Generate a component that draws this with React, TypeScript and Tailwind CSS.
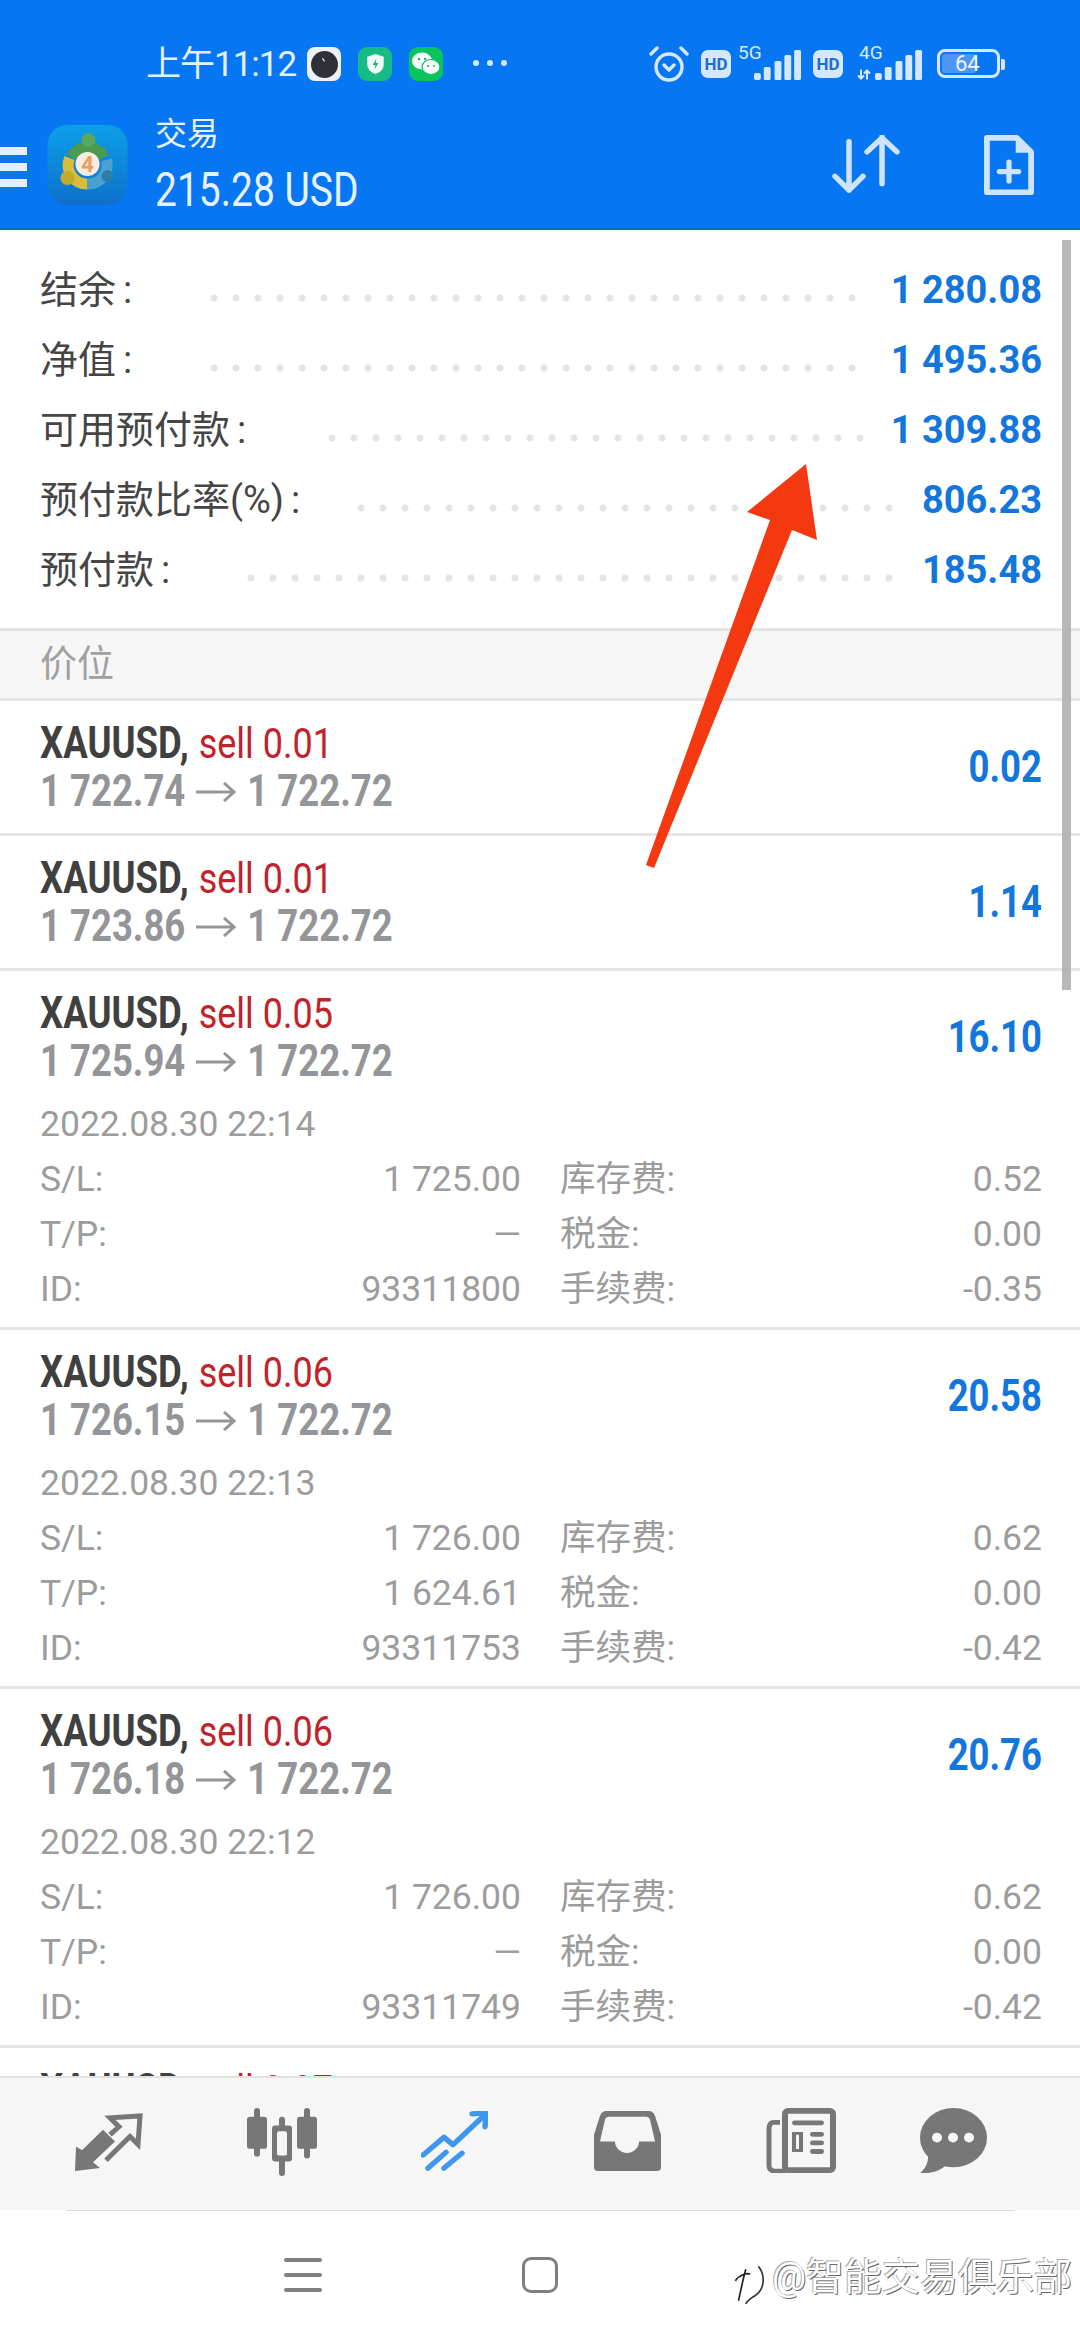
import React from 'react';

const summary = [
  { label: '结余', value: '1 280.08', dots: 'w-[660px] mr-[28px]' },
  { label: '净值', value: '1 495.36', dots: 'w-[660px] mr-[28px]' },
  { label: '可用预付款', value: '1 309.88', dots: 'w-[550px] mr-[20px]' },
  { label: '预付款比率(%)', value: '806.23', dots: 'w-[550px] mr-[22px]' },
  { label: '预付款', value: '185.48', dots: 'w-[660px] mr-[22px]' },
];

const positions = [
  { lot: '0.01', open: '1 722.74', profit: '0.02' },
  { lot: '0.01', open: '1 723.86', profit: '1.14' },
  { lot: '0.05', open: '1 725.94', profit: '16.10', date: '2022.08.30 22:14', sl: '1 725.00', swap: '0.52', tp: '—', id: '93311800', fee: '-0.35' },
  { lot: '0.06', open: '1 726.15', profit: '20.58', date: '2022.08.30 22:13', sl: '1 726.00', swap: '0.62', tp: '1 624.61', id: '93311753', fee: '-0.42' },
  { lot: '0.06', open: '1 726.18', profit: '20.76', date: '2022.08.30 22:12', sl: '1 726.00', swap: '0.62', tp: '—', id: '93311749', fee: '-0.42' },
  { lot: '0.07', open: '1 726.20', profit: '24.36' },
];

const SignalBars = ({ className }: { className: string }) => (
  <svg viewBox="0 0 48 30" className={className} fill="#d6e8fd" preserveAspectRatio="none">
    <rect x="0" y="23" width="7" height="7" rx="2" />
    <rect x="10" y="17" width="7" height="13" rx="1.5" />
    <rect x="21" y="11" width="7" height="19" rx="1.5" />
    <rect x="31" y="5" width="7" height="25" rx="1.5" />
    <rect x="41" y="0" width="7" height="30" rx="1.5" />
  </svg>
);

const HdBadge = () => (
  <div className="flex h-[28px] w-[30px] items-center justify-center rounded-[7px] bg-[#d6e8fd] font-['Roboto'] text-[17px] font-bold leading-none text-[#1a6fd0]">HD</div>
);

const StatusBar = () => (
  <div className="flex h-[106px] items-start pt-[46px] text-[#e3f0fe]">
    <div className="ml-[146px] flex h-[36px] w-[151px] items-center whitespace-nowrap font-['Roboto','Noto_Sans_CJK_SC',sans-serif] text-[35px] leading-none tracking-[-1px]">上午11:12</div>
    <div className="ml-[10px] mt-[1px] flex h-[34px] w-[34px] items-center justify-center rounded-[8px] bg-[#eef2f8]">
      <svg viewBox="0 0 26 26" className="h-[27px] w-[27px]">
        <circle cx="13" cy="13" r="13" fill="#2f3136" />
        <path d="M11 7l2 3" stroke="#fff" strokeWidth="1" />
      </svg>
    </div>
    <div className="ml-[17px] mt-[1px] flex h-[34px] w-[34px] items-center justify-center rounded-[9px] bg-[#17bb85]">
      <svg viewBox="0 0 20 24" className="h-[22px] w-[19px]">
        <path d="M10 1l9 3v8c0 6-4 9-9 11-5-2-9-5-9-11V4z" fill="#f0faf6" />
        <path d="M11 6l-4 7h3l-1 5 4-7h-3z" fill="#17a877" />
      </svg>
    </div>
    <div className="ml-[17px] mt-[1px] flex h-[34px] w-[34px] items-center justify-center rounded-[9px] bg-[#08c45c]">
      <svg viewBox="0 0 28 24" className="h-[24px] w-[28px]" fill="#fff">
        <ellipse cx="10" cy="9" rx="10" ry="8.5" />
        <ellipse cx="19" cy="15" rx="9" ry="7.5" stroke="#08c45c" strokeWidth="1.2" />
        <circle cx="7" cy="7" r="1.3" fill="#08c45c" />
        <circle cx="13" cy="7" r="1.3" fill="#08c45c" />
        <circle cx="16" cy="14" r="1.1" fill="#08c45c" />
        <circle cx="22" cy="14" r="1.1" fill="#08c45c" />
      </svg>
    </div>
    <div className="ml-[30px] flex h-[34px] items-center gap-[8px]">
      <span className="h-[6px] w-[6px] rounded-full bg-[#d6e8fd]" />
      <span className="h-[6px] w-[6px] rounded-full bg-[#d6e8fd]" />
      <span className="h-[6px] w-[6px] rounded-full bg-[#d6e8fd]" />
    </div>
    <svg viewBox="0 0 40 36" className="ml-[142px] h-[36px] w-[40px]" fill="none" stroke="#d6e8fd" strokeWidth="3.4" strokeLinecap="round" strokeLinejoin="round">
      <circle cx="20" cy="21" r="13" />
      <path d="M15 19l5 5 5-5" />
      <path d="M2 8l6-6M38 8l-6-6" />
    </svg>
    <div className="ml-[12px] mt-[4px]"><HdBadge /></div>
    <div className="relative ml-[7px] h-[34px] w-[63px]">
      <span className="absolute left-0 top-[-3px] font-['Roboto'] text-[19px] leading-none text-[#d6e8fd]">5G</span>
      <SignalBars className="absolute left-[16px] top-[4px] h-[30px] w-[47px]" />
    </div>
    <div className="ml-[12px] mt-[4px]"><HdBadge /></div>
    <div className="relative ml-[13px] h-[34px] w-[66px]">
      <span className="absolute left-[3px] top-[-3px] font-['Roboto'] text-[19px] leading-none text-[#d6e8fd]">4G</span>
      <svg viewBox="0 0 16 10" className="absolute left-0 top-[23px] h-[11px] w-[16px]" fill="none" stroke="#d6e8fd" strokeWidth="2">
        <path d="M5 0v9M2 6l3 3 3-3M11 10V1M8 4l3-3 3 3" />
      </svg>
      <SignalBars className="absolute left-[19px] top-[4px] h-[30px] w-[47px]" />
    </div>
    <div className="relative ml-[15px] mt-[3px] flex h-[29px] w-[63px] items-center rounded-[8px] border-[3px] border-[#d6e8fd] p-[2px]">
      <div className="h-full w-[34px] rounded-[3px] bg-[#4d95f7]" />
      <span className="absolute left-[15px] top-0 font-['Roboto'] text-[22px] leading-[23px] text-[#f0f6ff]">64</span>
    </div>
    <div className="ml-[1px] mt-[13px] h-[11px] w-[4px] rounded-r-[2px] bg-[#d6e8fd]" />
  </div>
);

const Mt4Logo = () => (
  <svg viewBox="0 0 80 80" className="h-[80px] w-[81px]" fill="none">
    <defs>
      <linearGradient id="mt4" x1="0" y1="0" x2="0" y2="1">
        <stop offset="0" stopColor="#0d9fe8" />
        <stop offset="1" stopColor="#0d70ca" />
      </linearGradient>
    </defs>
    <rect width="80" height="80" rx="20" fill="url(#mt4)" />
    <path d="M23.5 32A19 19 0 0 1 56.5 32" stroke="#4c9a4e" strokeWidth="11" />
    <path d="M22 33A19 19 0 0 0 40 59" stroke="#d8bd3a" strokeWidth="11" />
    <path d="M40 59A19 19 0 0 0 59 35" stroke="#4aa0d0" strokeWidth="11" />
    <circle cx="41" cy="15" r="7" fill="#5aa85c" />
    <circle cx="20" cy="53" r="7" fill="#c4a92f" />
    <circle cx="60" cy="51" r="6" fill="#2c7ea8" />
    <circle cx="40" cy="39" r="12" fill="#f6ece2" />
    <text x="40" y="47" textAnchor="middle" fontFamily="Roboto" fontWeight="700" fontSize="22" fill="#ee9d5c">4</text>
  </svg>
);

const AppHeader = () => (
  <div className="flex h-[122px] items-start">
    <div className="mt-[41px] flex w-[27px] flex-col gap-[8px]">
      <div className="h-[8px] bg-[#e4f0fe]" />
      <div className="h-[8px] bg-[#e4f0fe]" />
      <div className="h-[8px] bg-[#e4f0fe]" />
    </div>
    <div className="ml-[20px] mt-[19px]"><Mt4Logo /></div>
    <div className="ml-[27px] mt-[8px] w-[202px] text-[#e6f2ff]">
      <div className="font-['Roboto','Noto_Sans_CJK_SC',sans-serif] text-[32px] leading-[40px]">交易</div>
      <div className="mt-[15px] scale-y-[1.22] whitespace-nowrap font-['Roboto',sans-serif] text-[39px] leading-[42px]">215.28 USD</div>
    </div>
    <svg viewBox="0 0 70 62" preserveAspectRatio="none" className="ml-[475px] mt-[29px] h-[58px] w-[70px]" fill="none" stroke="#cfe4fb" strokeWidth="5.5" strokeLinecap="round" strokeLinejoin="round">
      <path d="M17 7v52M3 44l14 15 14-15" />
      <path d="M50 52V2M35 18L50 3l15 15" />
    </svg>
    <svg viewBox="0 0 52 64" preserveAspectRatio="none" className="ml-[82px] mt-[29px] h-[60px] w-[50px]" fill="none">
      <path d="M3 3h31l15 15v43H3z" stroke="#cfe4fb" strokeWidth="6" strokeLinejoin="round" />
      <path d="M33 1l18 18H33z" fill="#cfe4fb" />
      <path d="M26 29v20M16 39h20" stroke="#cfe4fb" strokeWidth="5.5" strokeLinecap="round" />
    </svg>
  </div>
);

const SummaryRow = ({ label, value, dots }: { label: string; value: string; dots: string }) => (
  <div className="flex h-[70px] items-center">
    <span className="font-['Roboto','Noto_Sans_CJK_SC',sans-serif] text-[38px] text-[#454545]">
      {label}
      <span className="ml-[7px]">:</span>
    </span>
    <div className={`ml-auto mt-[16px] h-[10px] ${dots} bg-[radial-gradient(circle,#e4e4e4_3px,transparent_4px)] bg-[length:22px_10px] bg-right bg-repeat-x`} />
    <span className="font-['Roboto',sans-serif] text-[38px] font-bold text-[#1276dc]">{value}</span>
  </div>
);

const DetailCell = ({ label, value }: { label: string; value?: string }) => (
  <div className="flex h-[55px] items-center justify-between">
    <span>{label}</span>
    <span>{value}</span>
  </div>
);

const PositionRow = ({ p }: { p: (typeof positions)[number] }) => (
  <div className={`border-b-[3px] border-[#e6e6e6] pl-[40px] pr-[38px] pt-[19px] font-['Roboto','Noto_Sans_CJK_SC',sans-serif] ${p.date ? 'pb-[10px]' : 'pb-[17px]'}`}>
    <div className="flex justify-between">
      <div>
        <div className="flex h-[48px] items-center gap-[10px]">
          <span className="scale-y-[1.2] text-[36.5px] font-bold text-[#404040]">XAUUSD,</span>
          <span className="scale-y-[1.2] text-[36px] text-[#c0232b]">sell {p.lot}</span>
        </div>
        <div className="flex h-[48px] items-center gap-[11px] text-[36.5px] font-bold text-[#939598]">
          <span className="scale-y-[1.2]">{p.open}</span>
          <svg viewBox="0 0 40 20" className="h-[20px] w-[40px]" fill="none" stroke="#939598" strokeWidth="3">
            <path d="M0 10h38M28 1l10 9-10 9" />
          </svg>
          <span className="scale-y-[1.2]">1 722.72</span>
        </div>
      </div>
      <span className="mt-[23px] h-[50px] scale-y-[1.2] text-[36.5px] font-bold leading-[50px] text-[#1276dc]">{p.profit}</span>
    </div>
    {p.date && (
      <div className="text-[35.5px] text-[#9c9c9c]">
        <div className="mb-[8px] mt-[18px] h-[40px] leading-[40px]">{p.date}</div>
        <div className="grid grid-cols-[481px_482px] gap-x-[39px]">
          <DetailCell label="S/L:" value={p.sl} />
          <DetailCell label="库存费:" value={p.swap} />
          <DetailCell label="T/P:" value={p.tp} />
          <DetailCell label="税金:" value="0.00" />
          <DetailCell label="ID:" value={p.id} />
          <DetailCell label="手续费:" value={p.fee} />
        </div>
      </div>
    )}
  </div>
);

const NavIcons = () => (
  <div className="flex h-[134px] items-start border-t-2 border-[#e2e2e2] bg-[#f6f6f6]">
    <svg viewBox="0 0 68 60" preserveAspectRatio="none" className="ml-[75px] mt-[35px] h-[59px] w-[68px]" fill="#777">
      <path d="M0 59L1 34 7 38 28 17 40 29 18 50 25 56z" />
      <path d="M31 48L55 24l8 8 2-29-30 2 9 9-9 8" fill="none" stroke="#777" strokeWidth="5" />
    </svg>
    <svg viewBox="0 0 70 70" preserveAspectRatio="none" className="ml-[104px] mt-[30px] h-[68px] w-[70px]" fill="#777">
      <rect x="7" y="0" width="6" height="50" rx="3" />
      <rect x="0" y="9" width="20" height="33" rx="3" />
      <rect x="32" y="9" width="6" height="61" rx="3" />
      <rect x="25" y="18" width="20" height="37" rx="3" />
      <rect x="30" y="24" width="10" height="25" rx="2" fill="#f6f6f6" />
      <rect x="57" y="0" width="6" height="52" rx="3" />
      <rect x="50" y="9" width="20" height="33" rx="3" />
    </svg>
    <svg viewBox="0 0 67 64" preserveAspectRatio="none" className="ml-[104px] mt-[33px] h-[60px] w-[67px]" fill="none" stroke="#3d97ee" strokeWidth="5.5" strokeLinecap="round" strokeLinejoin="round">
      <path d="M2 47l21-19 9 8L63 5" />
      <path d="M51 3l14-1-1 15" />
      <path d="M7 61l18-17M23 61l18-16" />
    </svg>
    <svg viewBox="0 0 67 63" preserveAspectRatio="none" className="ml-[106px] mt-[33px] h-[60px] w-[67px]">
      <path d="M12 0H55q4 0 6 5l6 20V59q0 4-4 4H4q-4 0-4-4V25L6 5q2-5 6-5z" fill="#777" />
      <path d="M15 6H52q3 0 4 3l5 23H45a12 12 0 0 1-24 0H6L11 9q1-3 4-3z" fill="#f6f6f6" />
    </svg>
    <svg viewBox="0 0 70 68" preserveAspectRatio="none" className="ml-[105px] mt-[30px] h-[65px] w-[70px]" fill="#777">
      <rect x="19" y="3" width="48" height="62" rx="3" fill="none" stroke="#777" strokeWidth="6" />
      <path d="M14 15H8q-5 0-5 7v38q0 6 6 6h11" fill="none" stroke="#777" strokeWidth="5" />
      <rect x="26" y="13" width="32" height="5" rx="2.5" />
      <path d="M26 25h11v21H26zM30 28v15h3V28z" fillRule="evenodd" />
      <rect x="44" y="25" width="14" height="5" rx="2.5" />
      <rect x="44" y="34" width="14" height="5" rx="2.5" />
      <rect x="44" y="43" width="14" height="5" rx="2.5" />
    </svg>
    <svg viewBox="0 0 67 68" preserveAspectRatio="none" className="ml-[84px] mt-[30px] h-[65px] w-[67px]" fill="#777">
      <ellipse cx="33.5" cy="31" rx="33.5" ry="31" />
      <path d="M8 46c1 10-2 17-8 22 9 1 19-1 26-8z" />
      <circle cx="17" cy="31" r="5" fill="#f6f6f6" />
      <circle cx="33" cy="31" r="5" fill="#f6f6f6" />
      <circle cx="49" cy="31" r="5" fill="#f6f6f6" />
    </svg>
  </div>
);

const SystemBar = () => (
  <div className="h-[130px] bg-white">
    <div className="ml-[66px] mr-[65px] h-[1px] bg-[#dcdcdc]" />
    <div className="flex items-start">
      <div className="ml-[284px] mt-[47px] flex w-[38px] flex-col gap-[11px]">
        <div className="h-[4px] rounded-full bg-[#808080]" />
        <div className="h-[4px] rounded-full bg-[#808080]" />
        <div className="h-[4px] rounded-full bg-[#808080]" />
      </div>
      <div className="ml-[200px] mt-[46px] h-[36px] w-[36px] rounded-[9px] border-[3.5px] border-[#808080]" />
      <svg viewBox="0 0 32 42" className="ml-[173px] mt-[52px] h-[44px] w-[38px]" fill="none" strokeWidth="1.6">
        <path d="M2 17c4-6 12-8 14-6M12 6c-3 10-5 22-7 30" stroke="#222" />
        <path d="M24 3c7 9 6 22-3 28-3 2-7 4-9 8" stroke="#333" />
      </svg>
      <span className="ml-[3px] mt-[41px] whitespace-nowrap font-['Roboto','Noto_Sans_CJK_SC',sans-serif] text-[38px] leading-[50px] text-white [text-shadow:1px_1px_0_#666,-1px_-1px_0_#aaa]">@智能交易俱乐部</span>
    </div>
  </div>
);

export default function App() {
  return (
    <div className="relative flex h-[2340px] w-[1080px] flex-col overflow-hidden bg-white">
      <header className="h-[230px] border-b-2 border-[#0b68c6] bg-[#0776f2]">
        <StatusBar />
        <AppHeader />
      </header>

      <main className="min-h-0 flex-1 overflow-hidden">
        <section className="h-[398px] pl-[40px] pr-[38px] pt-[25px]">
          {summary.map((row) => (
            <SummaryRow key={row.label} label={row.label} value={row.value} dots={row.dots} />
          ))}
        </section>
        <div className="flex h-[73px] items-center border-y-[3px] border-[#e4e4e4] bg-[#f6f6f6] pl-[40px] font-['Roboto','Noto_Sans_CJK_SC',sans-serif] text-[37px] text-[#a0a0a0]">价位</div>
        {positions.map((p, i) => (
          <PositionRow key={i} p={p} />
        ))}
      </main>

      <NavIcons />
      <SystemBar />

      {/* scrollbar */}
      <div className="absolute left-[1062px] top-[240px] h-[750px] w-[9px] bg-[#b8b8b8]" />

      {/* red annotation arrow */}
      <svg viewBox="0 0 1080 2340" className="pointer-events-none absolute inset-0 h-[2340px] w-[1080px]">
        <path d="M806 464L817 540 792 530 654 868 646 865 770 520 747 512z" fill="#f4380f" />
      </svg>
    </div>
  );
}
